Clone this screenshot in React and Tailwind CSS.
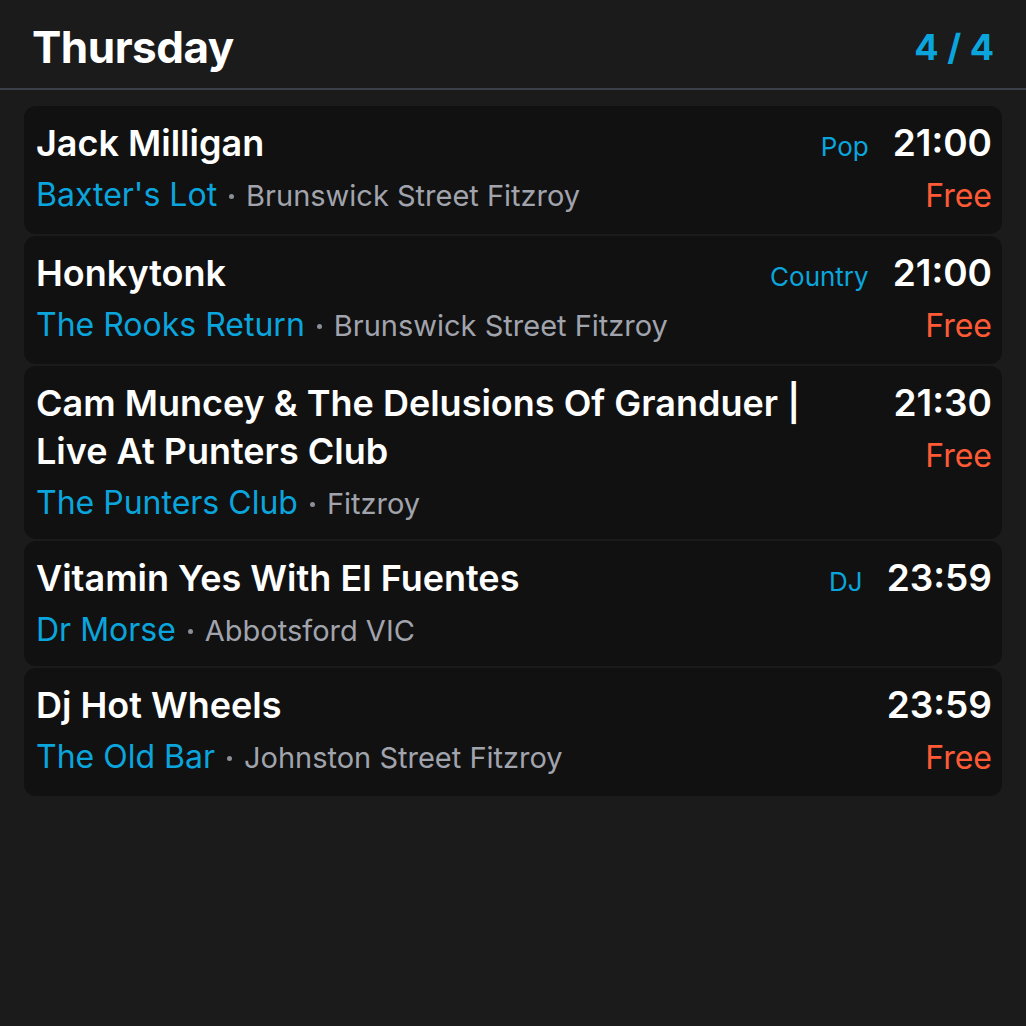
const events = [
  { title: "Jack Milligan", venue: "Baxter's Lot", place: "Brunswick Street Fitzroy", genre: "Pop", time: "21:00", free: true },
  { title: "Honkytonk", venue: "The Rooks Return", place: "Brunswick Street Fitzroy", genre: "Country", time: "21:00", free: true },
  { title: "Cam Muncey & The Delusions Of Granduer | Live At Punters Club", venue: "The Punters Club", place: "Fitzroy", genre: null, time: "21:30", free: true },
  { title: "Vitamin Yes With El Fuentes", venue: "Dr Morse", place: "Abbotsford VIC", genre: "DJ", time: "23:59", free: false },
  { title: "Dj Hot Wheels", venue: "The Old Bar", place: "Johnston Street Fitzroy", genre: null, time: "23:59", free: true },
];

function EventCard({ ev }) {
  return (
    <div className="flex justify-between gap-6 bg-[#111111] rounded-xl pl-3 pr-[10px] pt-[13px] pb-[16px]">
      <div className="min-w-0 flex-1">
        <div className="text-[36px] leading-[48px] font-semibold text-white">{ev.title}</div>
        <div className="flex items-baseline h-[40px] leading-[40px] mt-[8px] whitespace-nowrap overflow-hidden">
          <span className="text-[32px] text-[#0ba5dd]">{ev.venue}</span>
          <span className="w-[5px] h-[5px] shrink-0 rounded-full bg-[#8b8f98] mx-3 self-start mt-[19px]"></span>
          <span className="text-[29px] text-[#a1a4ad]">{ev.place}</span>
        </div>
      </div>
      <div className="flex flex-col items-end shrink-0">
        <div className="flex items-baseline gap-6 h-[48px]">
          {ev.genre && <span className="text-[26px] text-[#0ba5dd]">{ev.genre}</span>}
          <span className="text-[37px] leading-[48px] font-semibold text-white">{ev.time}</span>
        </div>
        {ev.free && <div className="text-[32px] leading-[45px] pt-[6px] text-[#ff5a36]">Free</div>}
      </div>
    </div>
  );
}

export default function App() {
  return (
    <div className="min-h-screen bg-[#1b1b1b] font-['Inter',sans-serif]">
      <div className="flex items-center justify-between px-8 pt-[6px] h-[90px] border-b-2 border-[#3a3f49]">
        <h1 className="text-[44px] font-bold text-white tracking-[-0.5px]">Thursday</h1>
        <span className="text-[36px] font-bold text-[#0ba5dd]">4 / 4</span>
      </div>
      <div className="flex flex-col gap-[2px] px-6 pt-4">
        {events.map((ev) => (
          <EventCard key={ev.title} ev={ev} />
        ))}
      </div>
    </div>
  );
}
